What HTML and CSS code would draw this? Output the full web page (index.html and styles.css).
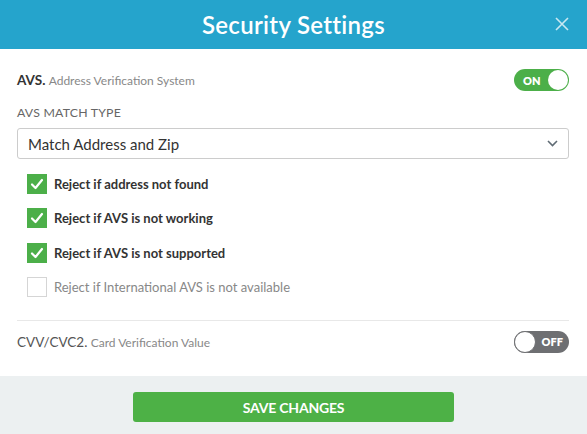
FILE: index.html
```html
<!DOCTYPE html>
<html>
<head>
<meta charset="utf-8">
<link rel="stylesheet" href="styles.css">
</head>
<body>
<div class="modal">
  <header class="header">
    <h1 class="title">Security Settings</h1>
    <button class="close" aria-label="Close">
      <svg width="14" height="14" viewBox="0 0 14 14"><path d="M1 1L13 13M13 1L1 13" stroke="currentColor" stroke-width="1.6" fill="none"/></svg>
    </button>
  </header>
  <main class="content">
    <div class="row avs-row">
      <div class="row-label"><span class="strong">AVS.</span> <span class="sub">Address Verification System</span></div>
      <div class="toggle on"><span class="toggle-text">ON</span><span class="knob"></span></div>
    </div>
    <div class="field-label">AVS MATCH TYPE</div>
    <div class="select">
      <span>Match Address and Zip</span>
      <svg class="chev" width="11" height="7" viewBox="0 0 11 7"><path d="M1 1L5.5 5.5L10 1" stroke="#5f6b74" stroke-width="1.6" fill="none"/></svg>
    </div>
    <ul class="checks">
      <li class="check checked"><span class="box"><svg width="14" height="12" viewBox="0 0 14 12"><path d="M2 6.5L5.5 10L12 2" stroke="#fff" stroke-width="2.2" fill="none" stroke-linecap="round" stroke-linejoin="round"/></svg></span>Reject if address not found</li>
      <li class="check checked"><span class="box"><svg width="14" height="12" viewBox="0 0 14 12"><path d="M2 6.5L5.5 10L12 2" stroke="#fff" stroke-width="2.2" fill="none" stroke-linecap="round" stroke-linejoin="round"/></svg></span>Reject if AVS is not working</li>
      <li class="check checked"><span class="box"><svg width="14" height="12" viewBox="0 0 14 12"><path d="M2 6.5L5.5 10L12 2" stroke="#fff" stroke-width="2.2" fill="none" stroke-linecap="round" stroke-linejoin="round"/></svg></span>Reject if AVS is not supported</li>
      <li class="check"><span class="box"></span>Reject if International AVS is not available</li>
    </ul>
    <div class="divider"></div>
    <div class="row cvv-row">
      <div class="row-label"><span class="plain">CVV/CVC2.</span> <span class="sub">Card Verification Value</span></div>
      <div class="toggle off"><span class="knob"></span><span class="toggle-text">OFF</span></div>
    </div>
  </main>
  <footer class="footer">
    <button class="save">SAVE CHANGES</button>
  </footer>
</div>
</body>
</html>
```
FILE: styles.css
```css
* { box-sizing: border-box; }
html, body { margin: 0; padding: 0; background: #fff; }
body { font-family: "Lato", "Open Sans", sans-serif; color: #333; }
.modal { width: 587px; height: 434px; display: flex; flex-direction: column; }
.header {
  height: 49px; background: #25a4cc; position: relative;
  display: flex; align-items: center; justify-content: center;
}
.title { margin: 0 0 1px; color: #fff; font-size: 24px; font-weight: 600; letter-spacing: 0.3px; }
.close {
  position: absolute; right: 18px; top: 17px; padding: 0; border: 0; background: none;
  color: rgba(255,255,255,0.75); width: 14px; height: 14px; display: block;
}
.close svg { display: block; }
.content { padding: 20px 18px 0 17px; flex: 1; }
.row { display: flex; align-items: center; justify-content: space-between; height: 22px; }
.row-label { font-size: 13px; }
.strong { font-weight: 700; color: #333; font-size: 13.5px; }
.plain { color: #555; font-size: 13.5px; }
.sub { color: #888; font-size: 12px; }
.toggle {
  width: 55px; height: 22px; border-radius: 11px; display: flex; align-items: center;
  color: #fff; font-weight: 800; font-size: 11px;
}
.toggle.on { background: #4caf49; padding: 0 1px 0 9px; justify-content: space-between; }
.toggle.off { background: #6e6f72; padding: 0 6px 0 0; justify-content: space-between; }
.knob { width: 20px; height: 20px; border-radius: 50%; background: #fff; display: block; }
.toggle.off .knob { width: 22px; height: 22px; border: 1px solid #6e6f72; }
.field-label { margin-top: 15px; font-size: 12.3px; color: #666; letter-spacing: 0.2px; line-height: 14px; }
.select {
  margin-top: 8px; height: 31px; border: 1px solid #ccc; border-radius: 3px;
  display: flex; align-items: center; justify-content: space-between;
  padding: 0 10px 0 10px; font-size: 15px; color: #333;
}
.chev { display: block; }
.checks { list-style: none; margin: 15px 0 0; padding: 0 0 0 10px; display: flex; flex-direction: column; gap: 14.3px; }
.check { display: flex; align-items: center; height: 20px; font-size: 13px; font-weight: 700; color: #333; }
.box {
  width: 20px; height: 20px; margin-right: 7px; display: flex; align-items: center; justify-content: center;
  border: 1px solid #d5d5d5; background: #fff;
}
.check.checked .box { background: #4caf49; border-color: #4caf49; }
.check:not(.checked) { color: #888; font-weight: 400; }
.divider { margin-top: 23px; height: 1px; background: #e8e8e8; }
.cvv-row { margin-top: 10px; }
.footer {
  height: 58px; background: #ecf0f1; display: flex; justify-content: center; padding-top: 16px;
}
.save {
  width: 321px; height: 30px; border: 0; border-radius: 3px; background: #4db146;
  color: #fff; font-family: "Lato", sans-serif; font-weight: 700; font-size: 14px; letter-spacing: -0.2px;
}
```
